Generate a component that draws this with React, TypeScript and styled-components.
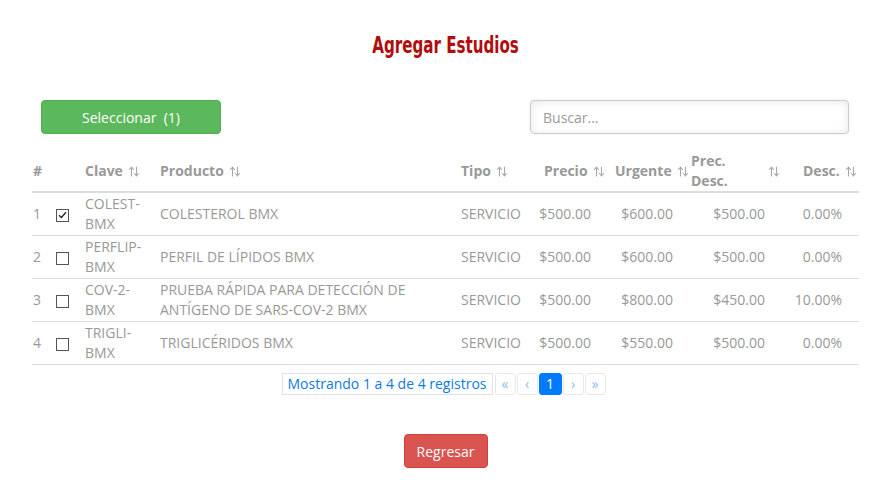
import React from "react";
import styled, { createGlobalStyle } from "styled-components";

const Global = createGlobalStyle`
  html, body { margin: 0; padding: 0; background: #fff; }
  body { font-family: "Open Sans", "Liberation Sans", sans-serif; font-size: 14px; color: #999; }
`;

const Page = styled.div`
  width: 892px;
  height: 496px;
  box-sizing: border-box;
  padding: 27px 33px 0 32px;
  display: flex;
  flex-direction: column;
`;

const Title = styled.h1`
  margin: 0;
  text-align: center;
  font-family: "DejaVu Sans Condensed", "Liberation Sans Narrow", "Liberation Sans", sans-serif;
  font-stretch: condensed;
  font-weight: 700;
  font-size: 23px;
  line-height: 36px;
  color: #b00d0d;
  letter-spacing: 0;
  transform: scaleX(0.73);
`;

const Toolbar = styled.div`
  margin-top: 37px;
  display: flex;
  justify-content: space-between;
  align-items: center;
  padding: 0 10px 0 9px;
`;

const Button = styled.button<{ $tone: "green" | "red"; $w: number }>`
  width: ${(p) => p.$w}px;
  height: 34px;
  border-radius: 4px;
  border: 1px solid ${(p) => (p.$tone === "green" ? "#4cae4c" : "#d43f3a")};
  background: ${(p) => (p.$tone === "green" ? "#5cb85c" : "#d9534f")};
  color: #fff;
  font-family: "Open Sans", "Liberation Sans", sans-serif;
  font-size: 14px;
  padding: 0;
  white-space: pre;
`;

const Search = styled.input`
  width: 319px;
  height: 34px;
  box-sizing: border-box;
  border: 1px solid #ccc;
  border-radius: 4px;
  padding: 0 12px;
  font-family: "Open Sans", "Liberation Sans", sans-serif;
  font-size: 14px;
  color: #555;
  box-shadow: inset 0 1px 8px rgba(0, 0, 0, 0.1), 0 0 4px rgba(0,0,0,0.06);
  &::placeholder { color: #999; }
`;

const Table = styled.table`
  margin-top: 17px;
  width: 827px;
  border-collapse: collapse;
  table-layout: fixed;
`;

const Th = styled.th<{ $pl: number }>`
  height: 40px;
  padding: 0 2px 0 ${(p) => p.$pl}px;
  text-align: left;
  font-weight: 700;
  color: #999;
  line-height: 20px;
  border-bottom: 2px solid #ddd;
  vertical-align: middle;
`;

const HeadInner = styled.div<{ $spread?: boolean }>`
  display: flex;
  align-items: center;
  gap: 5px;
  justify-content: ${(p) => (p.$spread ? "space-between" : "flex-start")};
`;

const Td = styled.td<{ $pl?: number; $right?: boolean }>`
  padding: 1px ${(p) => (p.$right ? 17 : 2)}px 1px ${(p) => p.$pl ?? 5}px;
  line-height: 20px;
  color: #999;
  text-align: ${(p) => (p.$right ? "right" : "left")};
  border-bottom: 1px solid #ddd;
  vertical-align: middle;
  white-space: ${(p) => (p.$right ? "nowrap" : "normal")};
`;

const Box = styled.span`
  display: inline-flex;
  width: 11px;
  height: 11px;
  border: 1px solid #555;
  align-items: center;
  justify-content: center;
  background: #fff;
  margin-left: 6px;
  vertical-align: middle;
`;

const Pager = styled.div`
  margin-top: 8px;
  display: flex;
  justify-content: center;
  gap: 1px;
  padding-right: 4px;
`;

const Info = styled.div`
  height: 22px;
  box-sizing: border-box;
  border: 1px solid #dee2e6;
  padding: 0 5px;
  margin-right: 1px;
  line-height: 20px;
  color: #0d7bdf;
  font-size: 14px;
`;

const PageBtn = styled.div<{ $active?: boolean }>`
  width: ${(p) => (p.$active ? 23 : 21)}px;
  height: 22px;
  box-sizing: border-box;
  border: 1px solid ${(p) => (p.$active ? "#007bff" : "#e6e9ec")};
  border-radius: 3px;
  background: ${(p) => (p.$active ? "#007bff" : "#fff")};
  color: ${(p) => (p.$active ? "#fff" : "#8cbcee")};
  font-size: 14px;
  display: flex;
  align-items: center;
  justify-content: center;
  line-height: 1;
`;

const Footer = styled.div`
  margin-top: 39px;
  display: flex;
  justify-content: center;
`;

const Sort = () => (
  <svg width="12" height="11" viewBox="0 0 12 11" style={{ flex: "none" }}>
    <g stroke="#aaa" strokeWidth="1.1" fill="none" strokeLinecap="round">
      <path d="M3.5 10V1.5M1.5 3.5L3.5 1.2L5.5 3.5" />
      <path d="M8.5 1V9.5M6.5 7.5L8.5 9.8L10.5 7.5" />
    </g>
  </svg>
);

const Check = () => (
  <svg width="9" height="8" viewBox="0 0 9 8">
    <path d="M1 4.2L3.4 6.5L8 1.2" stroke="#222" strokeWidth="1.3" fill="none" />
  </svg>
);

type Row = { n: number; clave: [string, string]; prod: string; precio: string; urg: string; pd: string; desc: string; checked?: boolean };

const rows: Row[] = [
  { n: 1, clave: ["COLEST-", "BMX"], prod: "COLESTEROL BMX", precio: "$500.00", urg: "$600.00", pd: "$500.00", desc: "0.00%", checked: true },
  { n: 2, clave: ["PERFLIP-", "BMX"], prod: "PERFIL DE LÍPIDOS BMX", precio: "$500.00", urg: "$600.00", pd: "$500.00", desc: "0.00%" },
  { n: 3, clave: ["COV-2-", "BMX"], prod: "PRUEBA RÁPIDA PARA DETECCIÓN DE ANTÍGENO DE SARS-COV-2 BMX", precio: "$500.00", urg: "$800.00", pd: "$450.00", desc: "10.00%" },
  { n: 4, clave: ["TRIGLI-", "BMX"], prod: "TRIGLICÉRIDOS BMX", precio: "$500.00", urg: "$550.00", pd: "$500.00", desc: "0.00%" },
];

export default function App() {
  return (
    <>
      <Global />
      <Page>
        <Title>Agregar Estudios</Title>
        <Toolbar>
          <Button $tone="green" $w={180}>{"Seleccionar  (1)"}</Button>
          <Search placeholder="Buscar..." />
        </Toolbar>
        <Table>
          <colgroup>
            <col style={{ width: 18 }} />
            <col style={{ width: 30 }} />
            <col style={{ width: 75 }} />
            <col style={{ width: 301 }} />
            <col style={{ width: 77 }} />
            <col style={{ width: 75 }} />
            <col style={{ width: 82 }} />
            <col style={{ width: 92 }} />
            <col style={{ width: 77 }} />
          </colgroup>
          <thead>
            <tr>
              <Th $pl={1}>#</Th>
              <Th $pl={0}></Th>
              <Th $pl={5}><HeadInner>Clave <Sort /></HeadInner></Th>
              <Th $pl={5}><HeadInner>Producto <Sort /></HeadInner></Th>
              <Th $pl={5}><HeadInner>Tipo <Sort /></HeadInner></Th>
              <Th $pl={11}><HeadInner>Precio <Sort /></HeadInner></Th>
              <Th $pl={7}><HeadInner>Urgente <Sort /></HeadInner></Th>
              <Th $pl={1}><HeadInner $spread><span>Prec.<br />Desc.</span><Sort /></HeadInner></Th>
              <Th $pl={21}><HeadInner>Desc. <Sort /></HeadInner></Th>
            </tr>
          </thead>
          <tbody>
            {rows.map((r) => (
              <tr key={r.n}>
                <Td $pl={1}>{r.n}</Td>
                <Td $pl={0}><Box>{r.checked && <Check />}</Box></Td>
                <Td>{r.clave[0]}<br />{r.clave[1]}</Td>
                <Td>{r.prod}</Td>
                <Td>SERVICIO</Td>
                <Td $right>{r.precio}</Td>
                <Td $right>{r.urg}</Td>
                <Td $right>{r.pd}</Td>
                <Td $right>{r.desc}</Td>
              </tr>
            ))}
          </tbody>
        </Table>
        <Pager>
          <Info>Mostrando 1 a 4 de 4 registros</Info>
          <PageBtn>«</PageBtn>
          <PageBtn>‹</PageBtn>
          <PageBtn $active>1</PageBtn>
          <PageBtn>›</PageBtn>
          <PageBtn>»</PageBtn>
        </Pager>
        <Footer>
          <Button $tone="red" $w={84}>Regresar</Button>
        </Footer>
      </Page>
    </>
  );
}
